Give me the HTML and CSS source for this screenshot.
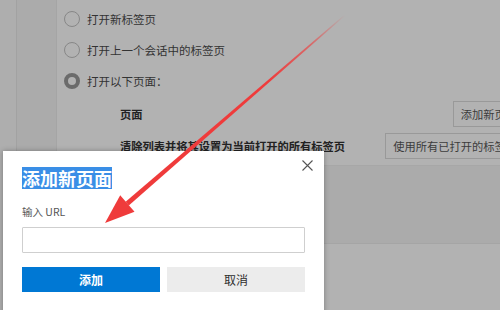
FILE: index.html
```html
<!DOCTYPE html>
<html lang="zh-CN">
<head>
<meta charset="utf-8">
<title>添加新页面</title>
<link rel="stylesheet" href="styles.css">
</head>
<body>
<div class="screen">
  <div class="rail"></div>
  <div class="sidebar"></div>
  <div class="main">
    <div class="options">
      <div class="opt"><span class="radio"></span><span>打开新标签页</span></div>
      <div class="opt"><span class="radio"></span><span>打开上一个会话中的标签页</span></div>
      <div class="opt"><span class="radio on"></span><span>打开以下页面：</span></div>
    </div>
    <div class="pages">
      <div class="page-row"><span class="bold">页面</span><span class="btn">添加新页面</span></div>
      <div class="page-row"><span class="bold">清除列表并将其设置为当前打开的所有标签页</span><span class="btn">使用所有已打开的标签页</span></div>
    </div>
    <div class="band"></div>
  </div>
</div>

<div class="dialog">
  <div class="title"><span class="sel">添加新页面</span></div>
  <svg class="close" width="11" height="11" viewBox="0 0 11 11"><path d="M0.5 0.5L10.5 10.5M10.5 0.5L0.5 10.5" stroke="#555" stroke-width="1.1" fill="none"/></svg>
  <div class="label">输入 URL</div>
  <div class="input"></div>
  <div class="actions">
    <div class="primary">添加</div>
    <div class="secondary">取消</div>
  </div>
</div>

<svg class="arrow" width="500" height="310" viewBox="0 0 500 310">
  <defs>
    <linearGradient id="fade" gradientUnits="userSpaceOnUse" x1="345" y1="15" x2="127" y2="204">
      <stop offset="0" stop-color="#ef3b3b" stop-opacity="0"/>
      <stop offset="0.15" stop-color="#ef3b3b" stop-opacity="0.6"/>
      <stop offset="0.35" stop-color="#ef3b3b" stop-opacity="1"/>
      <stop offset="1" stop-color="#ef3b3b" stop-opacity="1"/>
    </linearGradient>
  </defs>
  <polygon points="345.3,15.4 128.8,205.6 125.6,201.8 344.7,14.6" fill="url(#fade)"/>
  <polygon points="105,223 134.5,211.8 120.2,195.3" fill="#ef3b3b"/>
</svg>
</body>
</html>
```

FILE: styles.css
```css
html, body {
  margin: 0;
  padding: 0;
}
body {
  width: 500px;
  height: 310px;
  overflow: hidden;
  position: relative;
  background: #b2b2b2;
  font-family: "Noto Sans CJK SC", "Noto Sans", sans-serif;
}
.screen {
  display: flex;
  height: 310px;
}
.rail {
  flex: none;
  width: 16px;
  background: #aeaeae;
  border-right: 1px solid #a2a2a2;
}
.sidebar {
  flex: none;
  width: 39px;
  background: #ababab;
  border-right: 1px solid #a5a5a5;
}
.main {
  flex: none;
  width: 468px;
  background: #b2b2b2;
}
.options {
  padding-top: 3px;
}
.opt {
  display: flex;
  align-items: center;
  height: 31px;
  padding-left: 7px;
  gap: 7px;
  font-size: 11.5px;
  color: #333;
}
.radio {
  box-sizing: border-box;
  width: 16px;
  height: 16px;
  border: 1px solid #878787;
  border-radius: 50%;
  flex: none;
}
.radio.on {
  border: 4px solid #6b6b6b;
}
.pages {
  padding-top: 5px;
  padding-left: 63px;
  display: flex;
  flex-direction: column;
  gap: 6px;
}
.page-row {
  display: flex;
  justify-content: space-between;
  align-items: center;
  height: 26px;
}
.bold {
  font-size: 11.25px;
  font-weight: 700;
  color: #222;
}
.btn {
  box-sizing: border-box;
  height: 26px;
  display: flex;
  align-items: center;
  padding: 0 7px;
  border: 1px solid #999;
  font-size: 11.25px;
  color: #3c3c3c;
}
.band {
  margin-top: 6px;
  height: 77px;
  background: #ababab;
  border-top: 1px solid #a7a7a7;
  border-bottom: 1px solid #a5a5a5;
}
.dialog {
  position: absolute;
  left: 3px;
  top: 151px;
  width: 321px;
  height: 170px;
  box-sizing: border-box;
  padding: 16px 19px 0;
  background: #fff;
  box-shadow: 0 0 5px rgba(0, 0, 0, 0.3);
}
.title {
  height: 22px;
  line-height: 22px;
}
.sel {
  display: inline-block;
  background: #3a8ee6;
  color: #fff;
  font-size: 18px;
  font-weight: 700;
  line-height: 22px;
}
.close {
  position: absolute;
  left: 299px;
  top: 9px;
}
.label {
  margin-top: 16px;
  height: 14px;
  line-height: 14px;
  font-size: 10.5px;
  color: #555;
}
.input {
  margin-top: 8px;
  box-sizing: border-box;
  width: 283px;
  height: 26px;
  border: 1px solid #cfcfcf;
  border-radius: 1px;
}
.actions {
  margin-top: 14px;
  width: 283px;
  display: grid;
  grid-template-columns: 1fr 1fr;
  gap: 7px;
}
.primary, .secondary {
  height: 25px;
  display: flex;
  align-items: center;
  justify-content: center;
  font-size: 12px;
}
.primary {
  background: #0078d4;
  color: #fff;
  font-weight: 700;
}
.secondary {
  background: #ececec;
  color: #2e2e2e;
}
.arrow {
  position: absolute;
  left: 0;
  top: 0;
  pointer-events: none;
}
```
